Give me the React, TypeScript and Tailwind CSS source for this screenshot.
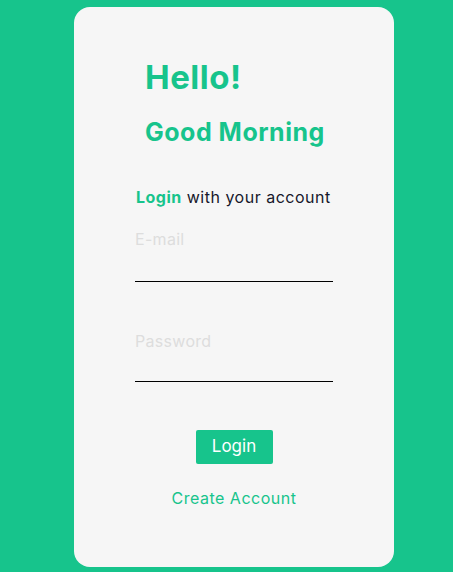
export default function App() {
  return (
    <div className="min-h-[572px] w-full bg-[#17c48c] pt-[7px] pb-[5px] font-['Inter',sans-serif]">
      <div className="ml-[74px] flex h-[560px] w-[320px] flex-col rounded-[16px] bg-[#f6f6f6]">
        <div className="pl-[71px] pt-[50px]">
          <h1 className="text-[33px] leading-[40px] font-bold tracking-[0.5px] text-[#17c48c]">Hello!</h1>
          <h2 className="mt-[19px] text-[25px] leading-[32px] font-bold tracking-[0.5px] text-[#17c48c]">Good Morning</h2>
        </div>
        <form className="mx-auto mt-[37px] flex w-[198px] flex-col">
          <p className="ml-[1px] text-[16px] leading-[24px] tracking-[0.5px] text-[#16172b]">
            <span className="font-bold text-[#17c48c]">Login</span> with your account
          </p>
          <input
            type="email"
            placeholder="E-mail"
            className="mt-[18px] h-[55px] border-b border-black bg-transparent pb-[31px] text-[16px] tracking-[0.3px] outline-none placeholder:text-[#dddddd]"
          />
          <input
            type="password"
            placeholder="Password"
            className="mt-[47px] h-[53px] border-b border-black bg-transparent pb-[29px] text-[16px] tracking-[0.3px] outline-none placeholder:text-[#dddddd]"
          />
          <button
            type="button"
            className="mx-auto mt-[48px] h-[34px] w-[77px] rounded-[2px] bg-[#17c48c] text-[17px] text-white"
          >
            Login
          </button>
          <a href="#" className="mx-auto mt-[22px] text-[16px] leading-[24px] tracking-[0.5px] text-[#17c48c]">
            Create Account
          </a>
        </form>
      </div>
    </div>
  );
}
